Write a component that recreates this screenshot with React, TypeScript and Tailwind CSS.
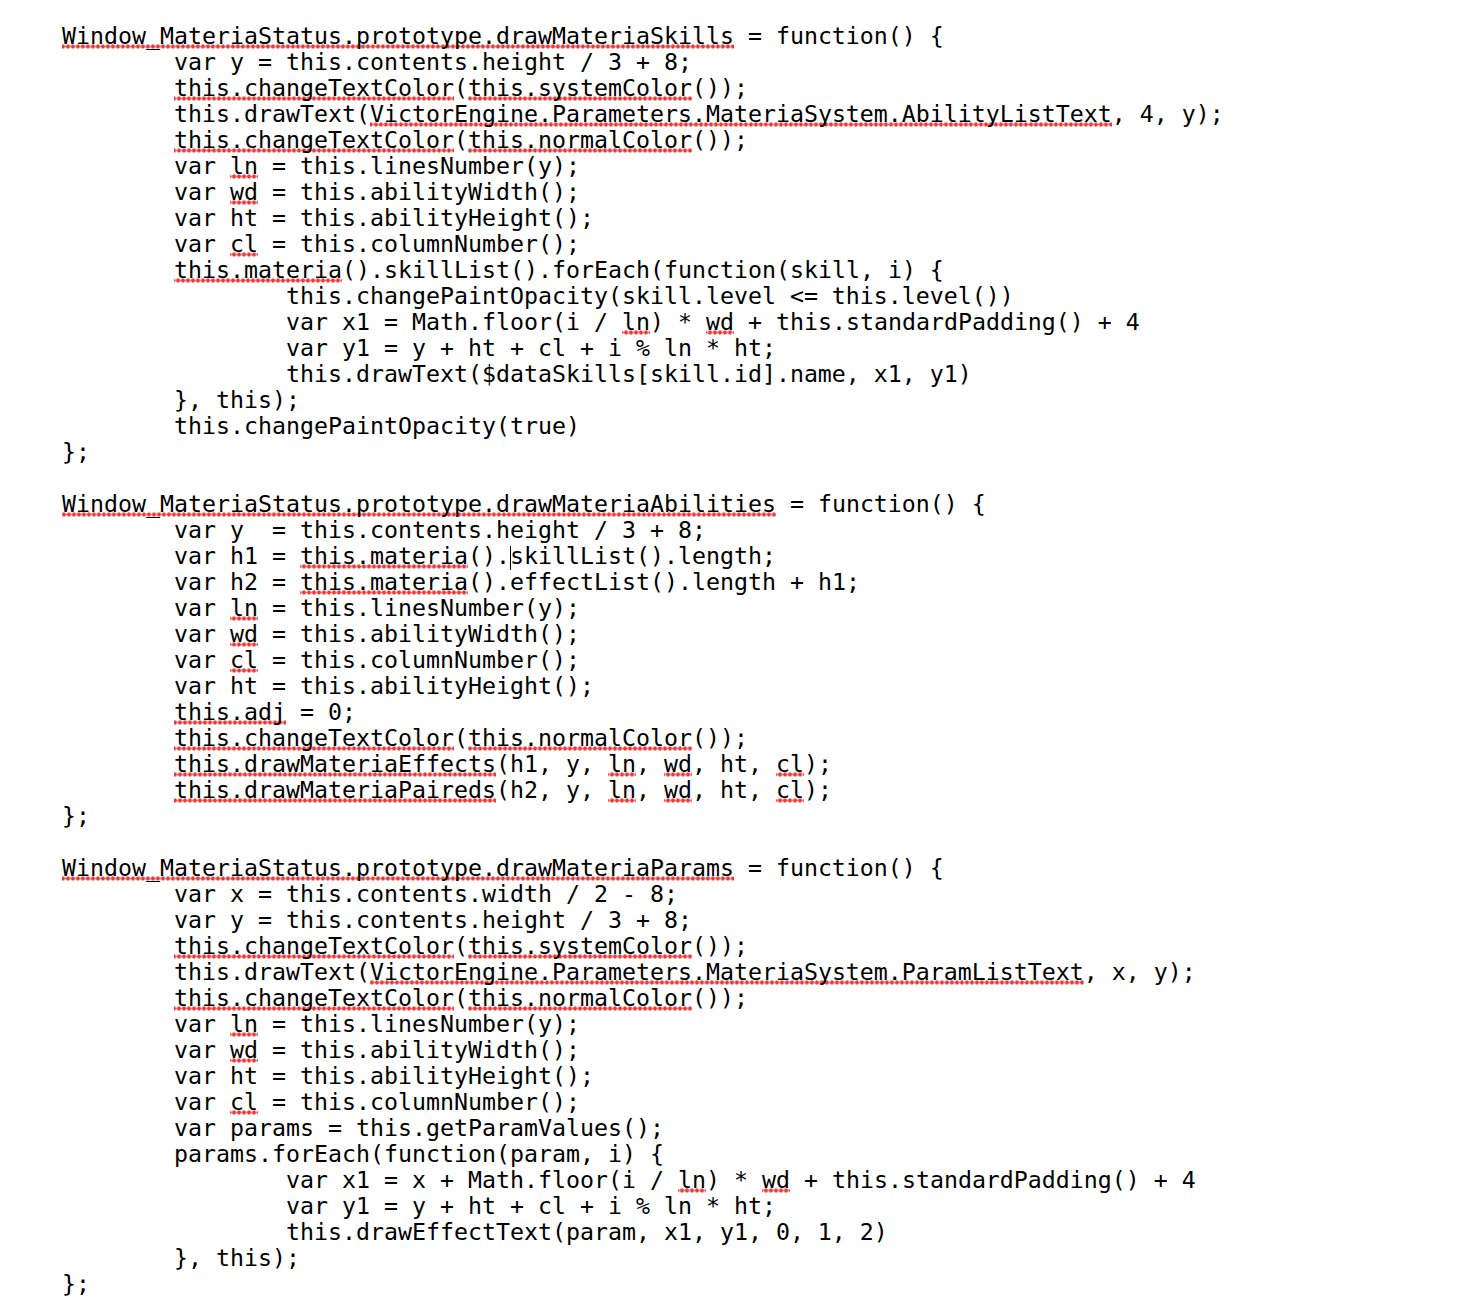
import React from "react";

const T = "        ";
const T2 = T + T;

const LINES: string[] = [
  "~Window_MateriaStatus.prototype.drawMateriaSkills~ = function() {",
  T + "var y = this.contents.height / 3 + 8;",
  T + "~this.changeTextColor~(~this.systemColor~());",
  T + "this.drawText(~VictorEngine.Parameters.MateriaSystem.AbilityListText~, 4, y);",
  T + "~this.changeTextColor~(~this.normalColor~());",
  T + "var ~ln~ = this.linesNumber(y);",
  T + "var ~wd~ = this.abilityWidth();",
  T + "var ht = this.abilityHeight();",
  T + "var ~cl~ = this.columnNumber();",
  T + "~this.materia~().skillList().forEach(function(skill, i) {",
  T2 + "this.changePaintOpacity(skill.level <= this.level())",
  T2 + "var x1 = Math.floor(i / ~ln~) * ~wd~ + this.standardPadding() + 4",
  T2 + "var y1 = y + ht + cl + i % ln * ht;",
  T2 + "this.drawText($dataSkills[skill.id].name, x1, y1)",
  T + "}, this);",
  T + "this.changePaintOpacity(true)",
  "};",
  "",
  "~Window_MateriaStatus.prototype.drawMateriaAbilities~ = function() {",
  T + "var y  = this.contents.height / 3 + 8;",
  T + "var h1 = ~this.materia~().^skillList().length;",
  T + "var h2 = ~this.materia~().effectList().length + h1;",
  T + "var ~ln~ = this.linesNumber(y);",
  T + "var ~wd~ = this.abilityWidth();",
  T + "var ~cl~ = this.columnNumber();",
  T + "var ht = this.abilityHeight();",
  T + "~this.adj~ = 0;",
  T + "~this.changeTextColor~(~this.normalColor~());",
  T + "~this.drawMateriaEffects~(h1, y, ~ln~, ~wd~, ht, ~cl~);",
  T + "~this.drawMateriaPaireds~(h2, y, ~ln~, ~wd~, ht, ~cl~);",
  "};",
  "",
  "~Window_MateriaStatus.prototype.drawMateriaParams~ = function() {",
  T + "var x = this.contents.width / 2 - 8;",
  T + "var y = this.contents.height / 3 + 8;",
  T + "~this.changeTextColor~(~this.systemColor~());",
  T + "this.drawText(~VictorEngine.Parameters.MateriaSystem.ParamListText~, x, y);",
  T + "~this.changeTextColor~(~this.normalColor~());",
  T + "var ~ln~ = this.linesNumber(y);",
  T + "var ~wd~ = this.abilityWidth();",
  T + "var ht = this.abilityHeight();",
  T + "var ~cl~ = this.columnNumber();",
  T + "var params = this.getParamValues();",
  T + "params.forEach(function(param, i) {",
  T2 + "var x1 = x + Math.floor(i / ~ln~) * ~wd~ + this.standardPadding() + 4",
  T2 + "var y1 = y + ht + cl + i % ln * ht;",
  T2 + "this.drawEffectText(param, x1, y1, 0, 1, 2)",
  T + "}, this);",
  "};",
];

function Plain({ text }: { text: string }) {
  const bits = text.split("^");
  return (
    <>
      {bits.map((b, i) => (
        <React.Fragment key={i}>
          {i > 0 && (
            <span className="inline-block w-px h-[24px] bg-black align-middle -mr-px" />
          )}
          {b}
        </React.Fragment>
      ))}
    </>
  );
}

function Line({ text }: { text: string }) {
  const parts = text.split("~");
  return (
    <div className="h-[26px] leading-[26px] whitespace-pre">
      {text === "" ? "\u00a0" : null}
      {parts.map((p, i) =>
        i % 2 === 1 ? (
          <span
            key={i}
            className="bg-[radial-gradient(circle,#ec3a3a_1.6px,#f67a7a_2px,transparent_2.4px)] bg-[length:5px_5px] bg-repeat-x bg-bottom"
          >
            <Plain text={p} />
          </span>
        ) : (
          <Plain key={i} text={p} />
        )
      )}
    </div>
  );
}

export default function App() {
  return (
    <div className="min-h-[1300px] w-full bg-white text-black pl-[62px] pt-[23px] font-['DejaVu_Sans_Mono',monospace] text-[23.25px]">
      {LINES.map((l, i) => (
        <Line key={i} text={l} />
      ))}
    </div>
  );
}
